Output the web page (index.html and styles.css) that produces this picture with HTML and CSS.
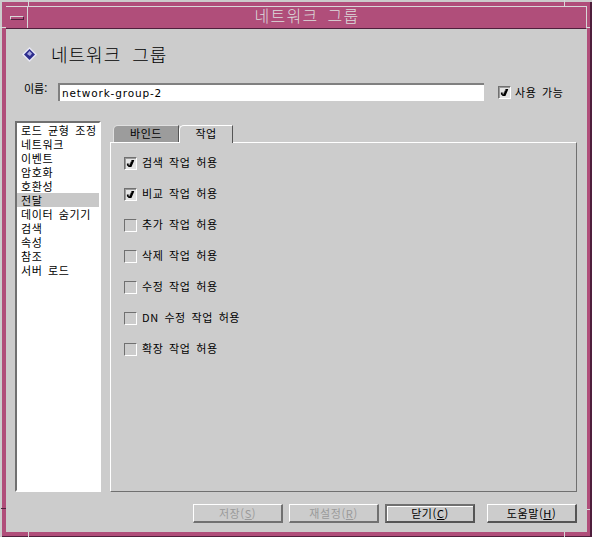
FILE: index.html
```html
<!DOCTYPE html>
<html lang="ko">
<head>
<meta charset="utf-8">
<title>네트워크 그룹</title>
<link rel="stylesheet" href="styles.css">
</head>
<body>
<div class="window">
  <span class="notch n1"></span><span class="notch n2"></span><span class="notch n3"></span><span class="notch n4"></span>
  <span class="notch n5"></span><span class="notch n6"></span><span class="notch n7"></span><span class="notch n8"></span>
  <header class="titlebar">
    <div class="menubtn"><span class="dash"></span></div>
    <div class="titletext">네트워크 그룹</div>
  </header>
  <main class="content">
    <div class="heading">
      <svg class="diamond" width="15" height="15" viewBox="0 0 15 15">
        <path d="M7.5 0L15 7.5L7.5 15L0 7.5Z" fill="#e8e8f4"/>
        <path d="M7.5 2L13 7.5L7.5 13L2 7.5Z" fill="#2c2c8c"/>
        <path d="M7.5 4L10 6.5L8 9L5 7Z" fill="#a8a8e0"/>
      </svg>
      <h1 class="headtext">네트워크 그룹</h1>
    </div>
    <div class="namerow">
      <label class="namelabel">이름:</label>
      <div class="nameinput">network-group-2</div>
      <div class="check on enable"><svg width="9" height="9" viewBox="0 0 10 10"><path d="M1 5h2v2h1V5h1V3h1V1h3v1L6 9H3L1 7Z" fill="#000"/></svg></div>
      <span class="ko enablelabel">사용 가능</span>
    </div>
    <div class="mainrow">
      <ul class="list">
        <li>로드 균형 조정</li>
        <li>네트워크</li>
        <li>이벤트</li>
        <li>암호화</li>
        <li>호환성</li>
        <li class="sel">전달</li>
        <li>데이터 숨기기</li>
        <li>검색</li>
        <li>속성</li>
        <li>참조</li>
        <li>서버 로드</li>
      </ul>
      <section class="tabs">
        <div class="tabstrip">
          <div class="tab back">바인드</div>
          <div class="tab front">작업</div>
        </div>
        <div class="panel">
          <div class="opt"><div class="check on"><svg width="9" height="9" viewBox="0 0 10 10"><path d="M1 5h2v2h1V5h1V3h1V1h3v1L6 9H3L1 7Z" fill="#000"/></svg></div><span class="ko">검색 작업 허용</span></div>
          <div class="opt"><div class="check on"><svg width="9" height="9" viewBox="0 0 10 10"><path d="M1 5h2v2h1V5h1V3h1V1h3v1L6 9H3L1 7Z" fill="#000"/></svg></div><span class="ko">비교 작업 허용</span></div>
          <div class="opt"><div class="check"></div><span class="ko">추가 작업 허용</span></div>
          <div class="opt"><div class="check"></div><span class="ko">삭제 작업 허용</span></div>
          <div class="opt"><div class="check"></div><span class="ko">수정 작업 허용</span></div>
          <div class="opt"><div class="check"></div><span class="ko">DN 수정 작업 허용</span></div>
          <div class="opt"><div class="check"></div><span class="ko">확장 작업 허용</span></div>
        </div>
      </section>
    </div>
    <footer class="buttons">
      <button class="btn off">저장(<u>S</u>)</button>
      <button class="btn off">재설정(<u>R</u>)</button>
      <button class="btn def">닫기(<u>C</u>)</button>
      <button class="btn help">도움말(<u>H</u>)</button>
    </footer>
  </main>
</div>
</body>
</html>
```
FILE: styles.css
```css
* { box-sizing: border-box; }
html, body { margin: 0; padding: 0; }
body {
  width: 592px; height: 537px; overflow: hidden; background: #cccccc;
  font-family: "Noto Sans CJK KR", "DejaVu Sans", sans-serif;
  font-size: 12px; color: #000;
}
.window {
  position: relative; width: 592px; height: 537px;
  display: flex; flex-direction: column;
  border-style: solid; border-width: 2px 0 0 2px; border-color: #cccccc;
  background: #b04e7a;
  padding: 0 2px 1px 0;
  box-shadow: inset -2px -1px 0 #4f1f3c;
}
.notch { position: absolute; background: #d8d8d8; }
.n1 { left: 26px; top: -2px; width: 1px; height: 27px; }
.n2 { left: -2px; top: 25px; width: 27px; height: 1px; }
.n3 { left: 562px; top: -2px; width: 1px; height: 6px; }
.n4 { left: 585px; top: 25px; width: 3px; height: 1px; }
.n5 { left: -1px; top: 506px; width: 5px; height: 1px; background: #4f1f3c; }
.n6 { left: 26px; top: 530px; width: 1px; height: 5px; }
.n7 { left: 562px; top: 530px; width: 1px; height: 5px; }
.n8 { left: 585px; top: 507px; width: 3px; height: 1px; }
.titlebar {
  flex: none; height: 23px; margin: 4px 3px 0 4px; padding-left: 22px;
  position: relative; display: flex; align-items: center; justify-content: center;
  border-top: 1px solid #d8d8d8; border-right: 1px solid #d8d8d8; border-bottom: 1px solid #4f1f3c;
  background: #b04e7a;
}
.menubtn { position: absolute; left: 0; top: 0; width: 22px; height: 21px; display: flex; align-items: center; justify-content: center; border-right: 1px solid #d8d8d8; }
.dash { display: block; width: 14px; height: 4px; background: #b04e7a; border: 1px solid #d8d8d8; border-right-color: #4f1f3c; border-bottom-color: #4f1f3c; }
.titletext { color: #dcdcdc; font-size: 16px; font-weight: 300; line-height: 20px; letter-spacing: 1.3px; word-spacing: 3px; padding-bottom: 5px; }
.content {
  flex: 1; min-height: 0; margin: 0 3px 4px 4px; background: #cccccc;
  display: flex; flex-direction: column; padding: 13px 10px 10px 9px;
}
.heading { display: flex; align-items: center; height: 24px; padding-left: 7px; gap: 14px; }
.diamond { flex: none; }
.headtext { margin: 0; font-size: 18px; font-weight: 300; line-height: 24px; letter-spacing: 1px; word-spacing: 5px; }
.namerow { display: flex; align-items: center; height: 18px; margin-top: 17px; }
.namelabel { width: 43px; padding-left: 9px; font-size: 11px; line-height: 18px; margin-top: -9px; }
.nameinput {
  width: 426px; height: 18px; background: #fff; padding: 1px 0 0 2px;
  border-style: solid; border-width: 2px 0 0 2px; border-color: #808080;
  font-family: "DejaVu Sans", sans-serif; font-size: 10.5px; line-height: 14px; letter-spacing: 0.85px;
}
.check {
  flex: none; width: 13px; height: 13px; background: #cccccc;
  border: 1px solid; border-color: #707070 #fff #fff #707070;
  display: flex; align-items: center; justify-content: center;
}
.check.on { background: #e4e4e4; box-shadow: inset 1px 1px 0 #9a9a9a; }
.enable { margin-left: 14px; }
.ko { font-size: 11px; line-height: 14px; letter-spacing: 0.6px; word-spacing: 2px; }
.enablelabel { margin-left: 4px; }
.mainrow { display: flex; margin-top: 20px; height: 371px; }
.list {
  list-style: none; margin: 0; width: 86px; height: 371px; background: #fff; padding: 0;
  border-style: solid; border-width: 2px; border-color: #707070 #fff #fff #707070;
}
.list li { height: 14px; line-height: 14px; padding-left: 4px; font-size: 11px; letter-spacing: 0.6px; word-spacing: 2px; white-space: nowrap; }
.list li.sel { background: #c8c8c8; }
.tabs { flex: none; width: 467px; margin-left: 9px; display: flex; flex-direction: column; padding-top: 4px; }
.tabstrip { display: flex; height: 17px; padding-left: 3px; position: relative; z-index: 1; }
.tab { height: 18px; line-height: 15px; text-align: center; font-size: 11px; letter-spacing: 0.5px; border-style: solid; border-width: 1px 1px 0 1px; border-radius: 5px 0 0 0; }
.tab.back { width: 66px; height: 17px; background: #9c9c9c; border-color: #e0e0e0 #555 transparent #e0e0e0; }
.tab.front { width: 54px; background: #cccccc; border-color: #fff #555 #cccccc #fff; }
.panel {
  flex: 1; background: #cccccc; padding: 13px 0 0 13px;
  border-style: solid; border-width: 1px; border-color: #fff #707070 #707070 #fff;
  display: flex; flex-direction: column; gap: 17px;
}
.opt { display: flex; align-items: center; height: 14px; gap: 5px; }
.opt .ko { margin-top: -2px; }
.buttons { display: flex; margin-top: 12px; padding-left: 178px; height: 19px; }
.btn {
  width: 90px; height: 19px; margin: 0 6px 0 0; padding: 0; background: #cccccc;
  border: 1px solid; border-color: #fff #555 #555 #fff; border-width: 1px 2px 2px 1px;
  font-family: inherit; font-size: 11px; line-height: 15px; letter-spacing: 0.6px; color: #000;
}
.btn.off { color: #9a9a9a; border-color: #fff #707070 #707070 #fff; }
.btn.def { border-width: 2px; border-color: #707070 #555 #555 #707070; box-shadow: inset 1px 1px 0 #fff; margin-right: 12px; }
.btn.help { margin-right: 0; }
```
